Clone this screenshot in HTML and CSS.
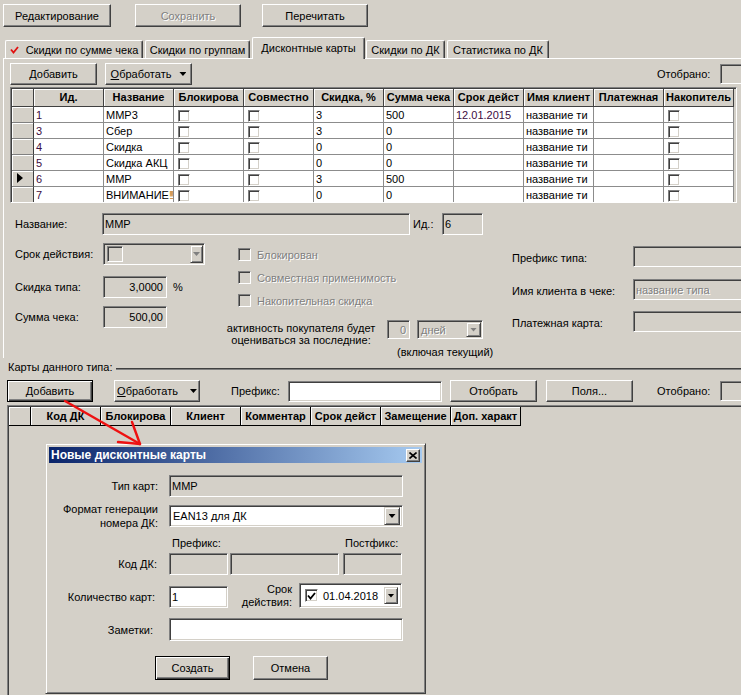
FILE: index.html
```html
<!DOCTYPE html>
<html lang="ru">
<head>
    <meta charset="UTF-8">
    <title>Дисконтные карты</title>
    <link rel="stylesheet" href="styles.css">
</head>
<body>
    <div class="topbar">
        <button class="btn top-btn btn-edit">Редактирование</button>
        <button class="btn top-btn btn-save" disabled>Сохранить</button>
        <button class="btn top-btn btn-reload">Перечитать</button>
    </div>

    <div class="tabs">
        <div class="tab tab-sum">
            <svg class="tick" width="9" height="8" viewBox="0 0 9 8"><polyline points="1,3.5 3.5,6.5 8,1" fill="none" stroke="#e01010" stroke-width="1.8"/></svg>
            Скидки по сумме чека
        </div>
        <div class="tab tab-groups">Скидки по группам</div>
        <div class="tab tab-cards active">Дисконтные карты</div>
        <div class="tab tab-dk">Скидки по ДК</div>
        <div class="tab tab-stat">Статистика по ДК</div>
    </div>

    <div class="panel">
        <div class="toolbar types-toolbar">
            <button class="btn tb-add">Добавить</button>
            <button class="btn tb-process"><span><u>О</u>бработать</span><span class="arrow-down"></span></button>
            <span class="selected-label">Отобрано:</span>
            <div class="field ro selected-field"></div>
        </div>

        <div class="grid types-grid">
            <table>
                <tr>
                    <th class="ind"></th>
                    <th>Ид.</th>
                    <th>Название</th>
                    <th>Блокирова</th>
                    <th>Совместно</th>
                    <th>Скидка, %</th>
                    <th>Сумма чека</th>
                    <th>Срок дейст</th>
                    <th>Имя клиент</th>
                    <th>Платежная</th>
                    <th>Накопитель</th>
                </tr>
                <tr>
                    <td class="ind"></td>
                    <td class="num">1</td><td>ММР3</td>
                    <td><span class="cb"></span></td><td><span class="cb"></span></td>
                    <td>3</td><td>500</td><td class="num">12.01.2015</td>
                    <td>название ти</td><td></td><td><span class="cb"></span></td>
                </tr>
                <tr>
                    <td class="ind"></td>
                    <td class="num">3</td><td>Сбер</td>
                    <td><span class="cb"></span></td><td><span class="cb"></span></td>
                    <td>3</td><td>0</td><td></td>
                    <td>название ти</td><td></td><td><span class="cb"></span></td>
                </tr>
                <tr>
                    <td class="ind"></td>
                    <td class="num">4</td><td>Скидка</td>
                    <td><span class="cb"></span></td><td><span class="cb"></span></td>
                    <td>0</td><td>0</td><td></td>
                    <td>название ти</td><td></td><td><span class="cb"></span></td>
                </tr>
                <tr>
                    <td class="ind"></td>
                    <td class="num">5</td><td>Скидка АКЦ</td>
                    <td><span class="cb"></span></td><td><span class="cb"></span></td>
                    <td>0</td><td>0</td><td></td>
                    <td>название ти</td><td></td><td><span class="cb"></span></td>
                </tr>
                <tr>
                    <td class="ind"><span class="row-marker"></span></td>
                    <td class="num">6</td><td>ММР</td>
                    <td><span class="cb"></span></td><td><span class="cb"></span></td>
                    <td>3</td><td>500</td><td></td>
                    <td>название ти</td><td></td><td><span class="cb"></span></td>
                </tr>
                <tr>
                    <td class="ind"></td>
                    <td class="num">7</td><td>ВНИМАНИЕ<span class="bang">!!!</span></td>
                    <td><span class="cb"></span></td><td><span class="cb"></span></td>
                    <td>0</td><td>0</td><td></td>
                    <td>название ти</td><td></td><td><span class="cb"></span></td>
                </tr>
            </table>
        </div>

        <div class="type-form">
            <div class="name-row">
                <span class="form-label">Название:</span>
                <div class="field ro name-field">ММР</div>
                <span class="id-label">Ид.:</span>
                <div class="field ro id-field">6</div>
            </div>

            <div class="form-cols">
                <div class="col-left">
                    <div class="left-row">
                        <span class="left-label">Срок действия:</span>
                        <div class="field ro combo term-combo">
                            <span class="inner-box"></span>
                            <span class="drop-btn"><span class="arrow-down off"></span></span>
                        </div>
                    </div>
                    <div class="left-row discount-row">
                        <span class="left-label">Скидка типа:</span>
                        <div class="field ro amount-field">3,0000</div>
                        <span class="percent">%</span>
                    </div>
                    <div class="left-row sum-row">
                        <span class="left-label">Сумма чека:</span>
                        <div class="field ro amount-field">500,00</div>
                    </div>
                </div>

                <div class="col-mid">
                    <div class="check-row"><span class="cb ro"></span><span class="off-text">Блокирован</span></div>
                    <div class="check-row"><span class="cb ro"></span><span class="off-text">Совместная применимость</span></div>
                    <div class="check-row"><span class="cb ro"></span><span class="off-text">Накопительная скидка</span></div>
                    <div class="activity-row">
                        <div class="activity-text">активность покупателя будет<br>оцениваться за последние:</div>
                        <div class="field ro days-count"><span class="off-text">0</span></div>
                        <div class="field ro combo days-unit">
                            <span class="off-text">дней</span>
                            <span class="drop-btn"><span class="arrow-down off"></span></span>
                        </div>
                    </div>
                    <div class="incl-note">(включая текущий)</div>
                </div>

                <div class="col-right">
                    <div class="right-row">
                        <span class="right-label">Префикс типа:</span>
                        <div class="field ro right-field"></div>
                    </div>
                    <div class="right-row client-row">
                        <span class="right-label">Имя клиента в чеке:</span>
                        <div class="field ro right-field"><span class="off-text">название типа</span></div>
                    </div>
                    <div class="right-row pay-row">
                        <span class="right-label">Платежная карта:</span>
                        <div class="field ro right-field"></div>
                    </div>
                </div>
            </div>
        </div>
    </div>

    <div class="cards-title">
        <span>Карты данного типа:</span>
        <div class="rule"></div>
    </div>

    <div class="toolbar cards-toolbar">
        <button class="btn btn-default cb-add">Добавить</button>
        <button class="btn cb-process"><span><u>О</u>бработать</span><span class="arrow-down"></span></button>
        <span class="prefix-label">Префикс:</span>
        <div class="field prefix-field"></div>
        <button class="btn cb-filter">Отобрать</button>
        <button class="btn cb-fields">Поля...</button>
        <span class="selected-label cards-selected">Отобрано:</span>
        <div class="field ro selected-field"></div>
    </div>

    <div class="grid cards-grid">
        <table>
            <tr>
                <th class="ind"></th>
                <th>Код ДК</th>
                <th>Блокирова</th>
                <th>Клиент</th>
                <th>Комментар</th>
                <th>Срок дейст</th>
                <th>Замещение</th>
                <th>Доп. характ</th>
            </tr>
        </table>
    </div>

    <div class="dialog">
        <div class="dialog-title">
            <span>Новые дисконтные карты</span>
            <button class="close-btn">
                <svg width="8" height="7" viewBox="0 0 8 7"><path d="M0.5 0.5 L7.5 6.5 M7.5 0.5 L0.5 6.5" stroke="#000" stroke-width="1.6"/></svg>
            </button>
        </div>
        <div class="dialog-body">
            <div class="dlg-row row-type">
                <span class="dlg-label">Тип карт:</span>
                <div class="field ro dlg-wide">ММР</div>
            </div>
            <div class="dlg-row row-format">
                <span class="dlg-label two-line">Формат генерации<br>номера ДК:</span>
                <div class="field combo dlg-wide">
                    <span>EAN13 для ДК</span>
                    <span class="drop-btn"><span class="arrow-down"></span></span>
                </div>
            </div>
            <div class="dlg-row row-captions">
                <span class="cap-prefix">Префикс:</span>
                <span>Постфикс:</span>
            </div>
            <div class="dlg-row row-code">
                <span class="dlg-label code-label">Код ДК:</span>
                <div class="field ro code-prefix"></div>
                <div class="field ro code-body"></div>
                <div class="field ro code-postfix"></div>
            </div>
            <div class="dlg-row row-count">
                <span class="dlg-label count-label">Количество карт:</span>
                <div class="field count-field">1</div>
                <span class="term-label">Срок<br>действия:</span>
                <div class="field date-field">
                    <span class="cb checked">
                        <svg width="9" height="8" viewBox="0 0 9 8"><polyline points="1,3.5 3.5,6.5 8,1" fill="none" stroke="#000" stroke-width="1.8"/></svg>
                    </span>
                    <span class="date-text">01.04.2018</span>
                    <span class="drop-btn"><span class="arrow-down"></span></span>
                </div>
            </div>
            <div class="dlg-row row-notes">
                <span class="dlg-label notes-label">Заметки:</span>
                <div class="field dlg-wide notes-field"></div>
            </div>
            <div class="dlg-buttons">
                <button class="btn btn-default dlg-btn">Создать</button>
                <button class="btn dlg-btn cancel-btn">Отмена</button>
            </div>
        </div>
    </div>

    <svg class="pointer-arrow" width="741" height="695" viewBox="0 0 741 695">
        <g stroke="#ee1111" stroke-width="2.4" stroke-linecap="round">
            <line x1="65" y1="401" x2="140" y2="444"/>
            <line x1="132" y1="422" x2="140" y2="444"/>
            <line x1="118" y1="442" x2="140" y2="444"/>
        </g>
    </svg>
</body>
</html>
```

FILE: styles.css
```css
* {
    box-sizing: border-box;
}
body {
    margin: 0;
    width: 741px;
    height: 695px;
    overflow: hidden;
    position: relative;
    background-color: #d4d0c8;
    font-family: "Liberation Sans", Arial, sans-serif;
    font-size: 11px;
    color: #000;
}

/* buttons and fields, win2k look */
.btn {
    display: flex;
    align-items: center;
    justify-content: center;
    height: 22px;
    padding: 0;
    background-color: #d4d0c8;
    border: 1px solid;
    border-color: #fff #404040 #404040 #fff;
    box-shadow: inset -1px -1px #808080;
    font: inherit;
    color: #000;
    white-space: nowrap;
}
.btn-default {
    border-color: #000;
    box-shadow: inset 1px 1px #fff, inset -1px -1px #404040, inset -2px -2px #808080;
}
.field {
    display: flex;
    align-items: center;
    height: 22px;
    padding: 0 2px;
    background-color: #fff;
    border: 1px solid;
    border-color: #808080 #fff #fff #808080;
    box-shadow: inset 1px 1px #404040, inset -1px -1px #d4d0c8;
    white-space: nowrap;
    overflow: hidden;
}
.field.ro {
    background-color: #d4d0c8;
}
.combo {
    padding: 1px;
}
.drop-btn {
    display: flex;
    align-items: center;
    justify-content: center;
    margin-left: auto;
    width: 15px;
    height: 100%;
    background-color: #d4d0c8;
    border: 1px solid;
    border-color: #d4d0c8 #404040 #404040 #d4d0c8;
    box-shadow: inset 1px 1px #fff, inset -1px -1px #808080;
}
.arrow-down {
    display: inline-block;
    width: 7px;
    height: 4px;
    background-color: #000;
    clip-path: polygon(0 0, 100% 0, 50% 100%);
}
.arrow-down.off {
    background-color: #808080;
}
.off-text {
    color: #808080;
    text-shadow: 1px 1px 0 #fff;
}
.cb {
    display: inline-flex;
    align-items: center;
    justify-content: center;
    width: 13px;
    height: 13px;
    background-color: #fff;
    border: 1px solid;
    border-color: #808080 #fff #fff #808080;
    box-shadow: inset 1px 1px #404040, inset -1px -1px #d4d0c8;
    flex-shrink: 0;
}
.cb.ro {
    background-color: #d4d0c8;
}

/* top buttons */
.topbar {
    display: flex;
    height: 27px;
    padding: 4px 0 0 3px;
}
.top-btn {
    height: 23px;
}
.btn-edit {
    width: 108px;
}
.btn-save {
    width: 106px;
    margin-left: 24px;
    color: #808080;
    text-shadow: 1px 1px 0 #fff;
}
.btn-reload {
    width: 106px;
    margin-left: 21px;
}

/* tabs */
.tabs {
    display: flex;
    align-items: flex-end;
    height: 21px;
    margin-top: 10px;
    padding-left: 5px;
}
.tab {
    display: flex;
    align-items: center;
    justify-content: center;
    height: 18px;
    border: 1px solid;
    border-bottom: none;
    border-color: #fff #404040 #fff #fff;
    border-radius: 2px 2px 0 0;
    box-shadow: inset -1px 0 #808080;
    white-space: nowrap;
    flex-shrink: 0;
}
.tab.active {
    position: relative;
    z-index: 1;
    height: 22px;
    margin-bottom: -1px;
    padding-bottom: 2px;
    background-color: #d4d0c8;
}
.tick {
    margin-right: 7px;
}
.tab-sum {
    width: 138px;
}
.tab-groups {
    width: 105px;
    margin-left: 2px;
}
.tab-cards {
    width: 113px;
    margin-left: 2px;
}
.tab-dk {
    width: 79px;
    margin-left: 1px;
}
.tab-stat {
    width: 102px;
    margin-left: 2px;
}

.panel {
    height: 300px;
    margin-left: 3px;
    border-top: 1px solid #fff;
    border-left: 1px solid #fff;
}

/* toolbars */
.toolbar {
    display: flex;
    align-items: center;
    height: 22px;
}
.toolbar > * {
    flex-shrink: 0;
}
.types-toolbar {
    margin-top: 4px;
    padding-left: 6px;
}
.tb-add {
    width: 87px;
}
.tb-process {
    width: 87px;
    margin-left: 8px;
    gap: 8px;
}
.selected-label {
    width: 63px;
    margin-left: 465px;
}
.selected-field {
    width: 40px;
    height: 20px;
}

/* grids */
.grid {
    border: 1px solid;
    border-color: #808080 #fff #fff #808080;
    box-shadow: inset 1px 1px #404040, inset -1px -1px #d4d0c8;
    padding: 1px;
    overflow: hidden;
}
.grid table {
    border-collapse: separate;
    border-spacing: 0;
    table-layout: fixed;
}
.grid th {
    width: 70px;
    padding: 0 2px;
    line-height: 17px;
    background-color: #d4d0c8;
    border-right: 1px solid #404040;
    border-bottom: 1px solid #404040;
    box-shadow: inset 1px 1px #fff;
    font-weight: bold;
    text-align: center;
    white-space: nowrap;
    overflow: hidden;
}
.grid th.ind {
    width: 22px;
}
.grid td {
    padding: 2px 2px 0;
    line-height: 13px;
    background-color: #fff;
    border-right: 1px solid #8c8c8c;
    border-bottom: 1px solid #8c8c8c;
    white-space: nowrap;
    overflow: hidden;
    vertical-align: top;
}
.grid td.ind {
    background-color: #d4d0c8;
    border-right-color: #404040;
    border-bottom-color: #808080;
    box-shadow: inset 1px 1px #fff;
}
.grid td.num {
    color: #3c0c40;
}
.grid td .cb {
    display: block;
    width: 12px;
    height: 12px;
    margin: 1px 0 0 2px;
}
.bang {
    letter-spacing: -2px;
    color: #c88a2a;
}
.row-marker {
    display: block;
    width: 6px;
    height: 10px;
    margin: 0 0 0 3px;
    background-color: #000;
    clip-path: polygon(0 0, 100% 50%, 0 100%);
}
.types-grid {
    width: 727px;
    height: 116px;
    margin: 2px 0 0 6px;
}
.types-grid table {
    width: 722px;
}

/* type form */
.type-form {
    padding-left: 11px;
}
.name-row {
    display: flex;
    align-items: center;
    margin-top: 10px;
}
.form-label {
    width: 87px;
}
.name-field {
    width: 308px;
}
.id-label {
    width: 29px;
    margin-left: 3px;
}
.id-field {
    width: 41px;
}
.form-cols {
    display: flex;
    margin-top: 8px;
}
.form-cols > div {
    flex-shrink: 0;
}
.col-left {
    width: 190px;
}
.left-row {
    display: flex;
    align-items: center;
    height: 22px;
}
.left-label {
    width: 88px;
}
.discount-row {
    margin-top: 11px;
}
.sum-row {
    margin-top: 8px;
}
.term-combo {
    width: 102px;
    padding-left: 3px;
}
.term-combo .drop-btn {
    width: 13px;
}
.inner-box {
    width: 16px;
    height: 16px;
    border: 1px solid;
    border-color: #808080 #fff #fff #808080;
    box-shadow: inset 1px 1px #404040;
}
.amount-field {
    width: 64px;
    justify-content: flex-end;
    padding-right: 3px;
}
.percent {
    margin-left: 6px;
}
.col-mid {
    width: 261px;
    margin-left: 17px;
}
.check-row {
    display: flex;
    align-items: center;
    height: 23px;
    padding-left: 16px;
}
.check-row .off-text {
    margin-left: 6px;
}
.activity-row {
    display: flex;
    align-items: flex-start;
    margin-top: 8px;
    height: 26px;
}
.activity-text {
    width: 158px;
    padding-top: 2px;
    line-height: 12px;
    text-align: center;
}
.days-count {
    width: 23px;
    height: 19px;
    margin-left: 7px;
    justify-content: flex-end;
    padding-right: 3px;
}
.days-unit {
    width: 66px;
    height: 19px;
    margin-left: 7px;
    padding-left: 3px;
}
.incl-note {
    margin-left: 175px;
    line-height: 12px;
    white-space: nowrap;
}
.col-right {
    margin-left: 29px;
    margin-top: 3px;
}
.right-row {
    display: flex;
    align-items: center;
    height: 21px;
}
.client-row {
    margin-top: 12px;
}
.pay-row {
    margin-top: 11px;
}
.right-label {
    width: 121px;
    padding-top: 3px;
}
.right-field {
    width: 120px;
    height: 21px;
}

/* cards section */
.cards-title {
    display: flex;
    align-items: center;
    height: 12px;
    margin-top: 3px;
    padding-left: 8px;
    line-height: 12px;
    white-space: nowrap;
}
.rule {
    flex: 1;
    height: 2px;
    margin: 4px 0 0 4px;
    border-top: 1px solid #404040;
    border-bottom: 1px solid #808080;
}
.cards-toolbar {
    margin-top: 7px;
    padding-left: 7px;
}
.cb-add {
    width: 86px;
}
.cb-process {
    width: 86px;
    margin-left: 21px;
    gap: 12px;
}
.prefix-label {
    width: 57px;
    margin-left: 31px;
}
.prefix-field {
    width: 154px;
    height: 21px;
}
.cb-filter {
    width: 87px;
    margin-left: 8px;
}
.cb-fields {
    width: 87px;
    margin-left: 9px;
}
.cards-selected {
    margin-left: 24px;
}
.cards-grid {
    width: 740px;
    height: 295px;
    margin: 3px 0 0 7px;
}
.cards-grid table {
    width: 512px;
}
.cards-grid th {
    line-height: 18px;
    border-right-color: #000;
    border-bottom-color: #000;
}

/* dialog window */
.dialog {
    position: absolute;
    left: 45px;
    top: 443px;
    z-index: 2;
    width: 381px;
    height: 251px;
    padding: 3px;
    background-color: #d4d0c8;
    border: 1px solid;
    border-color: #d4d0c8 #404040 #404040 #d4d0c8;
    box-shadow: inset 1px 1px #fff, inset -1px -1px #808080;
}
.dialog-title {
    display: flex;
    align-items: center;
    height: 16px;
    padding: 0 2px;
    background: linear-gradient(to right, #0a246a, #a6caf0);
    color: #fff;
    font-size: 12px;
    font-weight: bold;
    white-space: nowrap;
}
.close-btn {
    display: flex;
    align-items: center;
    justify-content: center;
    width: 14px;
    height: 13px;
    margin-left: auto;
    padding: 0;
    background-color: #d4d0c8;
    border: 1px solid;
    border-color: #fff #404040 #404040 #fff;
    box-shadow: inset -1px -1px #808080;
}
.dlg-row {
    display: flex;
    align-items: center;
}
.dlg-label {
    width: 109px;
    margin-right: 11px;
    text-align: right;
    white-space: nowrap;
}
.two-line {
    line-height: 14px;
}
.row-type {
    height: 22px;
    margin-top: 12px;
}
.dlg-wide {
    width: 234px;
}
.row-format {
    height: 22px;
    margin-top: 8px;
}
.row-format .field {
    padding-left: 3px;
}
.row-format .drop-btn {
    width: 16px;
    height: 18px;
    margin-right: 1px;
}
.row-captions {
    height: 12px;
    margin-top: 10px;
    line-height: 12px;
}
.cap-prefix {
    width: 173px;
    margin-left: 123px;
}
.row-code {
    height: 22px;
    margin-top: 4px;
}
.code-label {
    padding-right: 1px;
}
.code-prefix {
    width: 59px;
}
.code-body {
    width: 109px;
    margin-left: 2px;
}
.code-postfix {
    width: 59px;
    margin-left: 4px;
}
.row-count {
    align-items: flex-start;
    height: 25px;
    margin-top: 8px;
}
.count-label {
    align-self: flex-end;
    line-height: 22px;
    padding-right: 3px;
}
.count-field {
    align-self: flex-end;
    width: 59px;
}
.term-label {
    width: 64px;
    line-height: 13px;
    text-align: right;
}
.date-field {
    width: 103px;
    height: 25px;
    margin-left: 7px;
    padding: 0;
}
.date-field .cb {
    margin-left: 5px;
}
.date-text {
    margin-left: 5px;
}
.date-field .drop-btn {
    width: 14px;
    height: 17px;
    margin-right: 3px;
}
.row-notes {
    height: 23px;
    margin-top: 10px;
}
.notes-label {
    padding-right: 5px;
}
.notes-field {
    height: 23px;
}
.dlg-buttons {
    display: flex;
    margin-top: 15px;
    padding-left: 106px;
}
.dlg-btn {
    width: 75px;
    height: 24px;
}
.cancel-btn {
    margin-left: 23px;
}

.pointer-arrow {
    position: absolute;
    left: 0;
    top: 0;
    z-index: 3;
    pointer-events: none;
}
```
